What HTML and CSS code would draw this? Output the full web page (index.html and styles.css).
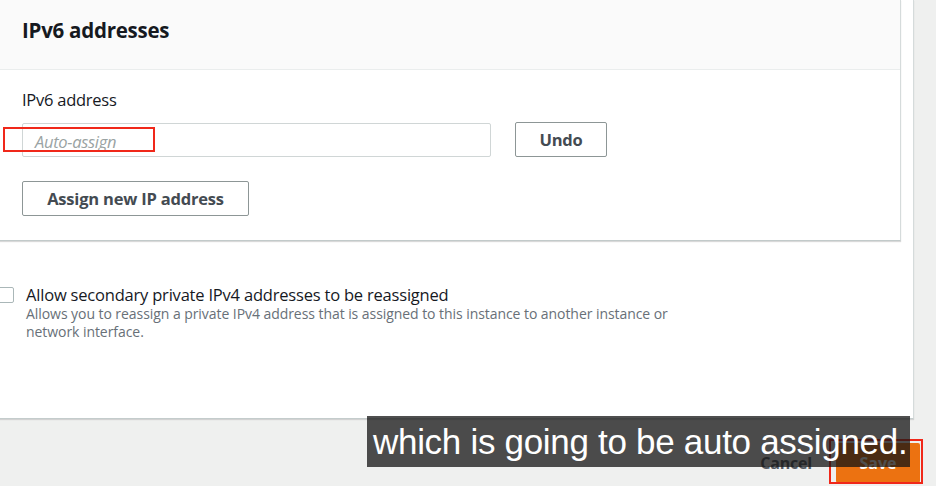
FILE: index.html
```html
<!DOCTYPE html>
<html>
<head>
<meta charset="utf-8">
<link rel="stylesheet" href="styles.css">
</head>
<body>
<div class="page">
  <div class="panel">
    <div class="section">
      <div class="section-head"><h2>IPv6 addresses</h2></div>
      <div class="section-body">
        <div class="label">IPv6 address</div>
        <div class="row">
          <div class="input">Auto-assign</div>
          <button class="btn btn-undo">Undo</button>
        </div>
        <button class="btn btn-assign">Assign new IP address</button>
      </div>
    </div>
    <div class="check-row">
      <span class="checkbox"></span>
      <div class="check-text">
        <div class="check-title">Allow secondary private IPv4 addresses to be reassigned</div>
        <div class="check-desc">Allows you to reassign a private IPv4 address that is assigned to this instance to another instance or<br>network interface.</div>
      </div>
    </div>
  </div>
  <div class="footer">
    <span class="cancel">Cancel</span>
    <span class="save">Save</span>
  </div>
  <div class="hl hl-input"></div>
  <div class="hl hl-save"></div>
  <div class="caption">which is going to be auto assigned.</div>
</div>
</body>
</html>
```
FILE: styles.css
```css
html, body {
  margin: 0;
  padding: 0;
}
body {
  width: 936px;
  height: 486px;
  overflow: hidden;
  background: #eff0ef;
  font-family: "Open Sans", "Liberation Sans", sans-serif;
  color: #16191f;
}
.page {
  position: relative;
  width: 936px;
  height: 486px;
  overflow: hidden;
}
.panel {
  width: 914px;
  height: 419px;
  background: #fff;
  border-right: 1px solid #d5dbdb;
  border-bottom: 1px solid #c4cccc;
  box-shadow: 0 1px 1px rgba(0,0,0,0.12);
  box-sizing: border-box;
}
.section {
  margin-left: -4px;
  width: 905px;
  border-right: 1px solid #d5dbdb;
  border-bottom: 1px solid #c2caca;
  box-shadow: 0 1px 1px rgba(0,0,0,0.15);
  box-sizing: border-box;
  background: #fff;
}
.section-head {
  height: 70px;
  background: #fafafa;
  border-bottom: 1px solid #eaeded;
  box-sizing: border-box;
  display: flex;
  align-items: center;
  padding-left: 26px;
  padding-bottom: 10px;
}
.section-head h2 {
  margin: 0;
  font-size: 20.5px;
  font-weight: 700;
  letter-spacing: -0.25px;
  color: #16191f;
}
.section-body {
  padding: 19px 0 24px 26px;
  height: 170px;
  box-sizing: border-box;
}
.label {
  font-size: 16.5px;
  color: #16191f;
  line-height: 22px;
  letter-spacing: -0.25px;
}
.row {
  display: flex;
  align-items: center;
  gap: 24px;
  margin-top: 12px;
}
.input {
  width: 469px;
  height: 34px;
  box-sizing: border-box;
  border: 1px solid #d0d6d6;
  border-radius: 2px;
  font-style: italic;
  font-size: 16.5px;
  color: #9aa3a3;
  padding-left: 12px;
  display: flex;
  align-items: center;
  padding-top: 2px;
  letter-spacing: -0.3px;
}
.btn {
  font-family: "Open Sans", "Liberation Sans", sans-serif;
  background: #fff;
  border: 1px solid #8d9696;
  border-radius: 2px;
  font-weight: 700;
  font-size: 16.5px;
  color: #444b52;
  height: 35px;
  box-sizing: border-box;
  padding: 0;
  letter-spacing: -0.2px;
}
.btn-undo {
  width: 92px;
  margin-top: -1px;
}
.btn-assign {
  display: block;
  width: 227px;
  margin-top: 24px;
}
.check-row {
  display: flex;
  align-items: flex-start;
  margin-top: 44px;
  gap: 12px;
}
.checkbox {
  display: block;
  width: 16px;
  height: 16px;
  border: 1px solid #aab7b8;
  border-radius: 2px;
  margin-left: -2px;
  margin-top: 2px;
  box-sizing: border-box;
  flex: none;
}
.check-title {
  font-size: 16.5px;
  line-height: 20px;
  color: #16191f;
  letter-spacing: -0.2px;
}
.check-desc {
  font-size: 14px;
  line-height: 18px;
  color: #687078;
  margin-top: 0;
  letter-spacing: -0.06px;
}
.footer {
  height: 67px;
  display: flex;
  align-items: center;
  justify-content: flex-end;
  padding-right: 16px;
  padding-top: 20px;
  box-sizing: border-box;
}
.cancel {
  font-weight: 700;
  font-size: 16px;
  color: #545b64;
  margin-right: 24px;
  letter-spacing: -0.2px;
}
.save {
  display: flex;
  align-items: center;
  justify-content: center;
  width: 84px;
  height: 40px;
  background: #ec7211;
  color: #fff;
  font-weight: 700;
  font-size: 16px;
  border-radius: 2px;
}
.hl {
  position: absolute;
  border: 2px solid #f0281a;
  box-sizing: border-box;
}
.hl-input {
  left: 3px;
  top: 127px;
  width: 152px;
  height: 25px;
}
.hl-save {
  left: 829px;
  top: 439px;
  width: 94px;
  height: 45px;
}
.caption {
  position: absolute;
  left: 367px;
  top: 416px;
  width: 543px;
  height: 51px;
  background: rgba(20,20,20,0.75);
  color: #fff;
  font-family: "Liberation Sans", Arial, sans-serif;
  font-size: 35px;
  line-height: 51px;
  padding-left: 6px;
  box-sizing: border-box;
  white-space: nowrap;
  letter-spacing: -0.3px;
}
```
